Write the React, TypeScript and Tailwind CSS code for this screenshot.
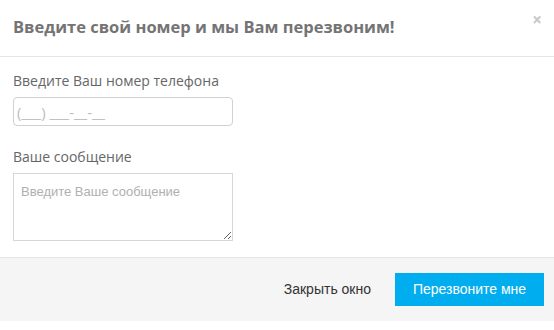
export default function App() {
  return (
    <div className="w-[554px] h-[330px] bg-white font-['Open_Sans',sans-serif]">
      <div className="relative h-[57px] border-b border-[#e5e5e5] pl-[13px] flex items-center">
        <h2 className="text-[16.5px] font-bold text-[#747474] leading-none -mt-[2px]">
          Введите свой номер и мы Вам перезвоним!
        </h2>
        <button className="absolute right-[12px] top-[11px] text-[#c8c8c8] text-[17px] font-bold leading-none">
          ×
        </button>
      </div>

      <div className="px-[13px] pt-[14px] pb-[16px]">
        <label className="block text-[14px] text-[#666] leading-5 mb-[6px]">
          Введите Ваш номер телефона
        </label>
        <input
          type="tel"
          placeholder="(___) ___-__-__"
          className="block w-[220px] h-[29px] px-[3px] border border-[#d0d0d0] rounded-[4px] text-[15px] placeholder:text-[#bdbdbd] focus:outline-none"
        />

        <label className="block text-[14px] text-[#666] leading-5 mt-[21px] mb-[6px]">
          Ваше сообщение
        </label>
        <textarea
          placeholder="Введите Ваше сообщение"
          className="block w-[220px] h-[68px] px-[7px] pt-[8px] pb-[5px] border border-[#d6d6d6] text-[13px] font-['Liberation_Sans',sans-serif] placeholder:text-[#b0b0b0] focus:outline-none"
        />
      </div>

      <div className="h-[64px] bg-[#f5f5f5] border-t border-[#e5e5e5] flex items-center justify-end pr-[10px] gap-[24px] font-['Liberation_Sans',sans-serif]">
        <button className="text-[14px] text-[#333]">Закрыть окно</button>
        <button className="w-[149px] h-[33px] bg-[#00aeef] text-white text-[14px]">
          Перезвоните мне
        </button>
      </div>
    </div>
  );
}
